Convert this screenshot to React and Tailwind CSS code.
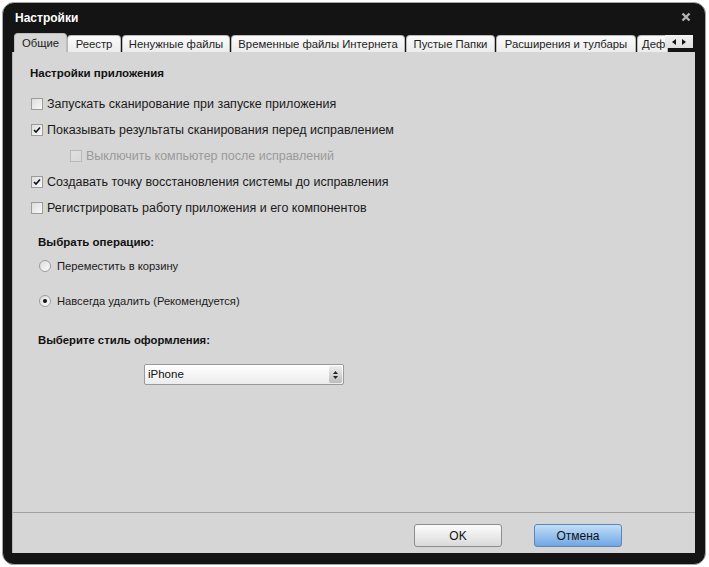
import React from 'react';

const font = { fontFamily: '"Liberation Sans", Arial, sans-serif' };

const tabs = [
  { label: 'Общие', w: 'w-[53px]', active: true },
  { label: 'Реестр', w: 'w-[54px]' },
  { label: 'Ненужные файлы', w: 'w-[108px]' },
  { label: 'Временные файлы Интернета', w: 'w-[174px]' },
  { label: 'Пустые Папки', w: 'w-[89px]' },
  { label: 'Расширения и тулбары', w: 'w-[140px]' },
  { label: 'Деф', w: 'w-[31px]' },
];

const CheckBox = ({ checked, disabled }) => (
  <div
    className={`w-[12px] h-[12px] border flex items-center justify-center bg-gradient-to-br ${
      disabled ? 'border-[#b8b8b8] from-[#e2e2e2] to-[#d8d8d8]' : 'border-[#9c9c9c] from-[#dcdcdc] to-[#fafafa]'
    }`}
  >
    {checked && (
      <svg width="8" height="8" viewBox="0 0 8 8">
        <path d="M1 4 L3 6 L7 1.5" fill="none" stroke="#111" strokeWidth="1.6" />
      </svg>
    )}
  </div>
);

const Radio = ({ checked }) => (
  <div className="w-[12px] h-[12px] rounded-full border border-[#9c9c9c] bg-gradient-to-br from-[#dcdcdc] to-[#fbfbfb] flex items-center justify-center">
    {checked && <div className="w-[4px] h-[4px] rounded-full bg-[#111]" />}
  </div>
);

const CheckRow = ({ label, checked, disabled, indent }) => (
  <div className={`h-[26px] flex items-center gap-[4px] ${indent ? 'pl-[57px]' : 'pl-[18px]'}`}>
    <CheckBox checked={checked} disabled={disabled} />
    <span className={`text-[12.5px] ${disabled ? 'text-[#9a9a9a]' : 'text-[#1a1a1a]'}`}>{label}</span>
  </div>
);

export default function App() {
  return (
    <div className="w-[709px] h-[567px] bg-white pt-[2px] pl-[2px]" style={font}>
      <div className="w-[704px] h-[563px] rounded-[12px] border border-[#a6a6a6] bg-[#141414] flex flex-col pl-[9px] pr-[10px] pb-[11px]">
        {/* title bar */}
        <div className="h-[30px] flex items-center justify-between pl-[3px] pr-[4px]">
          <span className="text-white font-bold text-[12px]">Настройки</span>
          <svg width="10" height="10" viewBox="0 0 10 10" className="mt-[-2px]">
            <path d="M1.5 1.5 L8.5 8.5 M8.5 1.5 L1.5 8.5" stroke="#b4b4b4" strokeWidth="2.4" />
          </svg>
        </div>

        {/* tabs */}
        <div className="h-[19px] flex items-end pl-[2px] relative">
          {tabs.map((t, i) => (
            <div
              key={i}
              className={`${t.w} shrink-0 overflow-hidden whitespace-nowrap rounded-t-[4px] border border-b-0 flex items-center text-[11.3px] text-[#222] ${
                t.active
                  ? 'h-[19px] bg-[#d6d6d6] border-[#bdbdbd] justify-center'
                  : 'h-[17px] bg-gradient-to-b from-[#fbfbfb] to-[#ececec] border-[#b9b9b9] mr-[1px]'
              } ${i === 6 ? 'justify-start pl-[4px]' : 'justify-center'}`}
            >
              {t.label}
            </div>
          ))}
          <div className="absolute right-[2px] top-[2px] w-[28px] h-[13px] bg-gradient-to-b from-[#f2f2f2] to-[#dedede] flex items-center justify-center gap-[6px]">
            <svg width="4" height="6" viewBox="0 0 4 6">
              <path d="M4 0 L0 3 L4 6 Z" fill="#111" />
            </svg>
            <svg width="4" height="6" viewBox="0 0 4 6">
              <path d="M0 0 L4 3 L0 6 Z" fill="#111" />
            </svg>
          </div>
        </div>

        {/* panel */}
        <div className="flex-1 bg-[#d6d6d6] flex flex-col border-l border-[#b5b5b5]">
          <div className="flex-1 border-b border-[#a3a3a3] pt-[12px]">
            <div className="h-[20px] flex items-center pl-[17px] text-[11.5px] font-bold text-[#111]">
              Настройки приложения
            </div>
            <div className="mt-[7px]">
              <CheckRow label="Запускать сканирование при запуске приложения" />
              <CheckRow label="Показывать результаты сканирования перед исправлением" checked />
              <CheckRow label="Выключить компьютер после исправлений" disabled indent />
              <CheckRow label="Создавать точку восстановления системы до исправления" checked />
              <CheckRow label="Регистрировать работу приложения и его компонентов" />
            </div>

            <div className="mt-[12px] h-[20px] flex items-center pl-[25px] text-[11.5px] font-bold text-[#111]">
              Выбрать операцию:
            </div>
            <div className="mt-[3px] h-[20px] flex items-center gap-[6px] pl-[26px]">
              <Radio />
              <span className="text-[11.2px] text-[#1a1a1a]">Переместить в корзину</span>
            </div>
            <div className="mt-[15px] h-[20px] flex items-center gap-[6px] pl-[26px]">
              <Radio checked />
              <span className="text-[11.2px] text-[#1a1a1a]">Навсегда удалить (Рекомендуется)</span>
            </div>

            <div className="mt-[19px] h-[20px] flex items-center pl-[25px] text-[11.3px] font-bold text-[#111]">
              Выберите стиль оформления:
            </div>
            <div className="mt-[14px] ml-[131px] w-[200px] h-[21px] border border-[#9a9a9a] rounded-[2px] bg-gradient-to-b from-[#ffffff] to-[#ececec] flex items-center justify-between pl-[3px] pr-[1px]">
              <span className="text-[11.5px] text-[#111]">iPhone</span>
              <div className="w-[13px] h-[17px] bg-gradient-to-b from-[#eeeeee] to-[#bcbcbc] flex flex-col items-center justify-center gap-[2px] rounded-[2px]">
                <svg width="5" height="3" viewBox="0 0 5 3">
                  <path d="M0 3 L2.5 0 L5 3 Z" fill="#222" />
                </svg>
                <svg width="5" height="3" viewBox="0 0 5 3">
                  <path d="M0 0 L2.5 3 L5 0 Z" fill="#222" />
                </svg>
              </div>
            </div>
          </div>

          {/* footer */}
          <div className="h-[40px] flex justify-end items-start pt-[11px] pr-[73px] gap-[32px]">
            <button className="w-[88px] h-[23px] rounded-[3px] border border-[#8d8d8d] bg-gradient-to-b from-[#fcfcfc] to-[#dadada] text-[12px] text-[#111]">
              OK
            </button>
            <button className="w-[88px] h-[23px] rounded-[3px] border border-[#5a86b8] bg-gradient-to-b from-[#c4def7] to-[#6ea6e4] text-[12px] text-[#111]">
              Отмена
            </button>
          </div>
        </div>
      </div>
    </div>
  );
}
